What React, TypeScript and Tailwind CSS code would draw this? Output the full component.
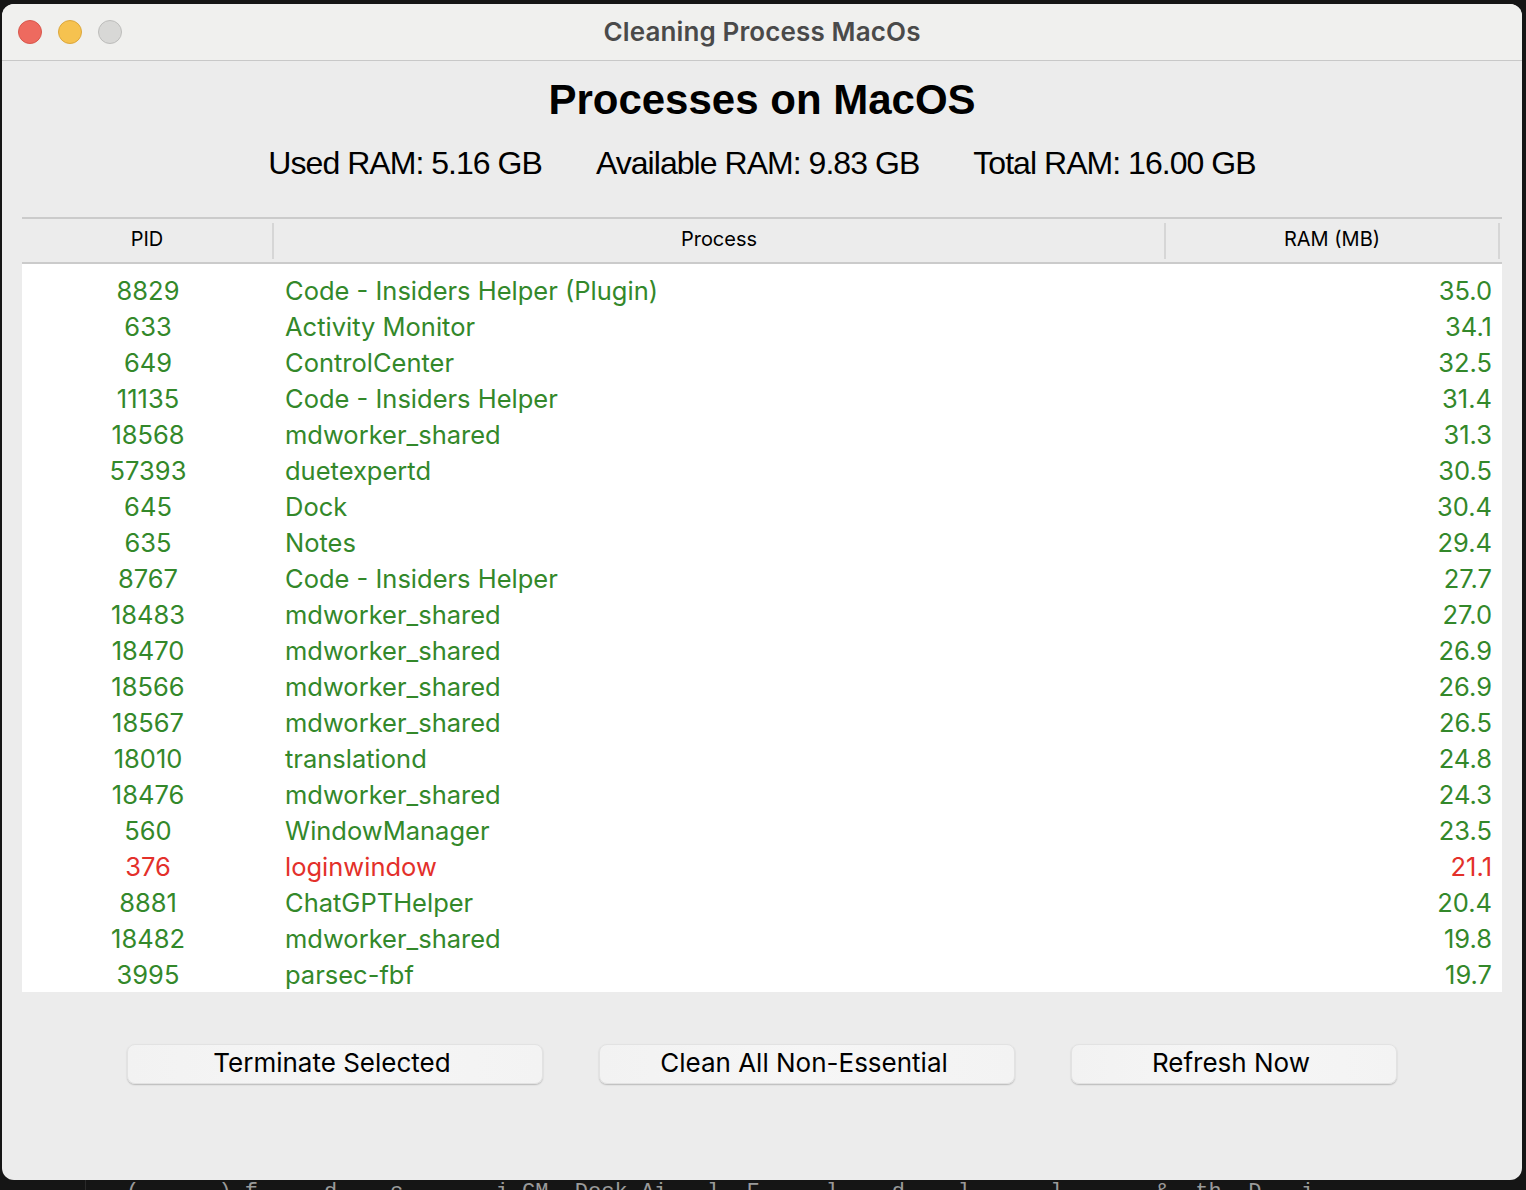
import React from 'react';

type Proc = { pid: number; name: string; ram: string; essential?: boolean };

const processes: Proc[] = [
  { pid: 8829, name: 'Code - Insiders Helper (Plugin)', ram: '35.0' },
  { pid: 633, name: 'Activity Monitor', ram: '34.1' },
  { pid: 649, name: 'ControlCenter', ram: '32.5' },
  { pid: 11135, name: 'Code - Insiders Helper', ram: '31.4' },
  { pid: 18568, name: 'mdworker_shared', ram: '31.3' },
  { pid: 57393, name: 'duetexpertd', ram: '30.5' },
  { pid: 645, name: 'Dock', ram: '30.4' },
  { pid: 635, name: 'Notes', ram: '29.4' },
  { pid: 8767, name: 'Code - Insiders Helper', ram: '27.7' },
  { pid: 18483, name: 'mdworker_shared', ram: '27.0' },
  { pid: 18470, name: 'mdworker_shared', ram: '26.9' },
  { pid: 18566, name: 'mdworker_shared', ram: '26.9' },
  { pid: 18567, name: 'mdworker_shared', ram: '26.5' },
  { pid: 18010, name: 'translationd', ram: '24.8' },
  { pid: 18476, name: 'mdworker_shared', ram: '24.3' },
  { pid: 560, name: 'WindowManager', ram: '23.5' },
  { pid: 376, name: 'loginwindow', ram: '21.1', essential: true },
  { pid: 8881, name: 'ChatGPTHelper', ram: '20.4' },
  { pid: 18482, name: 'mdworker_shared', ram: '19.8' },
  { pid: 3995, name: 'parsec-fbf', ram: '19.7' },
];

const sf = "font-['Inter','Noto_Sans',sans-serif]";
const helv = "font-['Liberation_Sans','Arial',sans-serif]";

function TrafficLights() {
  return (
    <div className="flex items-center gap-4 pl-4">
      <div className="w-6 h-6 rounded-full bg-[#ee6a5f] border border-[#d8574c]" />
      <div className="w-6 h-6 rounded-full bg-[#f6c24f] border border-[#dca73c]" />
      <div className="w-6 h-6 rounded-full bg-[#d8d8d6] border border-[#bdbdbb]" />
    </div>
  );
}

function ActionButton({ label, width }: { label: string; width: string }) {
  return (
    <button
      className={`${width} h-10 rounded-[8px] bg-gradient-to-r from-[#f2f2f2] via-[#f6f6f6] to-[#f3f3f3] border border-[#e2e2e2] shadow-[0_1px_1.5px_rgba(0,0,0,0.22)] text-[26px] text-black ${sf} leading-none pb-[2px] pr-[6px]`}
    >
      {label}
    </button>
  );
}

export default function App() {
  return (
    <div className="w-[1526px] h-[1190px] bg-[#151515] overflow-hidden flex flex-col">
      {/* Window */}
      <div className="ml-[2px] mt-[4px] w-[1520px] h-[1176px] rounded-[12px] bg-[#ececec] flex flex-col overflow-hidden shrink-0">
        {/* Title bar */}
        <div className="h-[57px] shrink-0 bg-[#f0f0ee] border-b border-[#c8c8c8] grid grid-cols-[1fr_auto_1fr] items-center">
          <TrafficLights />
          <div className={`text-[26px] font-semibold text-[#4a4a4a] ${sf} tracking-[0.005em] pb-[2px]`}>
            Cleaning Process MacOs
          </div>
          <div />
        </div>

        {/* Heading */}
        <h1 className={`mt-[14px] h-[50px] leading-[50px] text-center text-[42px] font-bold text-black ${helv}`}>
          Processes on MacOS
        </h1>

        {/* RAM summary */}
        <div className={`mt-[18px] h-[40px] flex items-center justify-center gap-[54px] text-[32px] tracking-[-0.03em] text-black ${helv}`}>
          <span>Used RAM: 5.16 GB</span>
          <span>Available RAM: 9.83 GB</span>
          <span>Total RAM: 16.00 GB</span>
        </div>

        {/* Table */}
        <div className="mt-[34px] mx-[20px] flex flex-col">
          <div className={`h-[47px] border-y-2 border-[#cbcbcb] flex items-center text-[20px] text-black ${sf}`}>
            <div className="w-[252px] h-[36px] pb-[4px] flex items-center justify-center border-r-2 border-[#d6d6d6]">PID</div>
            <div className="w-[892px] h-[36px] pb-[4px] flex items-center justify-center border-r-2 border-[#d6d6d6]">Process</div>
            <div className="w-[334px] h-[36px] pb-[4px] flex items-center justify-center border-r-2 border-[#d6d6d6]">RAM (MB)</div>
          </div>
          <div className={`bg-white pt-[9px] h-[728px] text-[25.5px] ${sf}`}>
            {processes.map((p) => (
              <div
                key={p.pid}
                className={`h-[36px] flex items-center ${p.essential ? 'text-[#e3302a]' : 'text-[#33882a]'}`}
              >
                <div className="w-[252px] text-center">{p.pid}</div>
                <div className="w-[892px] pl-[11px]">{p.name}</div>
                <div className="w-[326px] text-right">{p.ram}</div>
              </div>
            ))}
          </div>
        </div>

        {/* Buttons */}
        <div className="mt-[52px] flex justify-center gap-[56px]">
          <ActionButton label="Terminate Selected" width="w-[416px]" />
          <ActionButton label="Clean All Non-Essential" width="w-[416px]" />
          <ActionButton label="Refresh Now" width="w-[326px]" />
        </div>
      </div>

      {/* Background terminal peeking below the window */}
      <div className="flex-1 flex">
        <div className="w-[86px] border-r border-[#2a2a2a]" />
        <div className="pl-[40px] -mt-[4px] text-[22px] text-[#9a9a9a] font-['Liberation_Mono',monospace] whitespace-pre">
          (      ) f     d    c       i CM  Dock Ai   l  F     l    d    l      l       &  th  D   i
        </div>
      </div>
    </div>
  );
}
